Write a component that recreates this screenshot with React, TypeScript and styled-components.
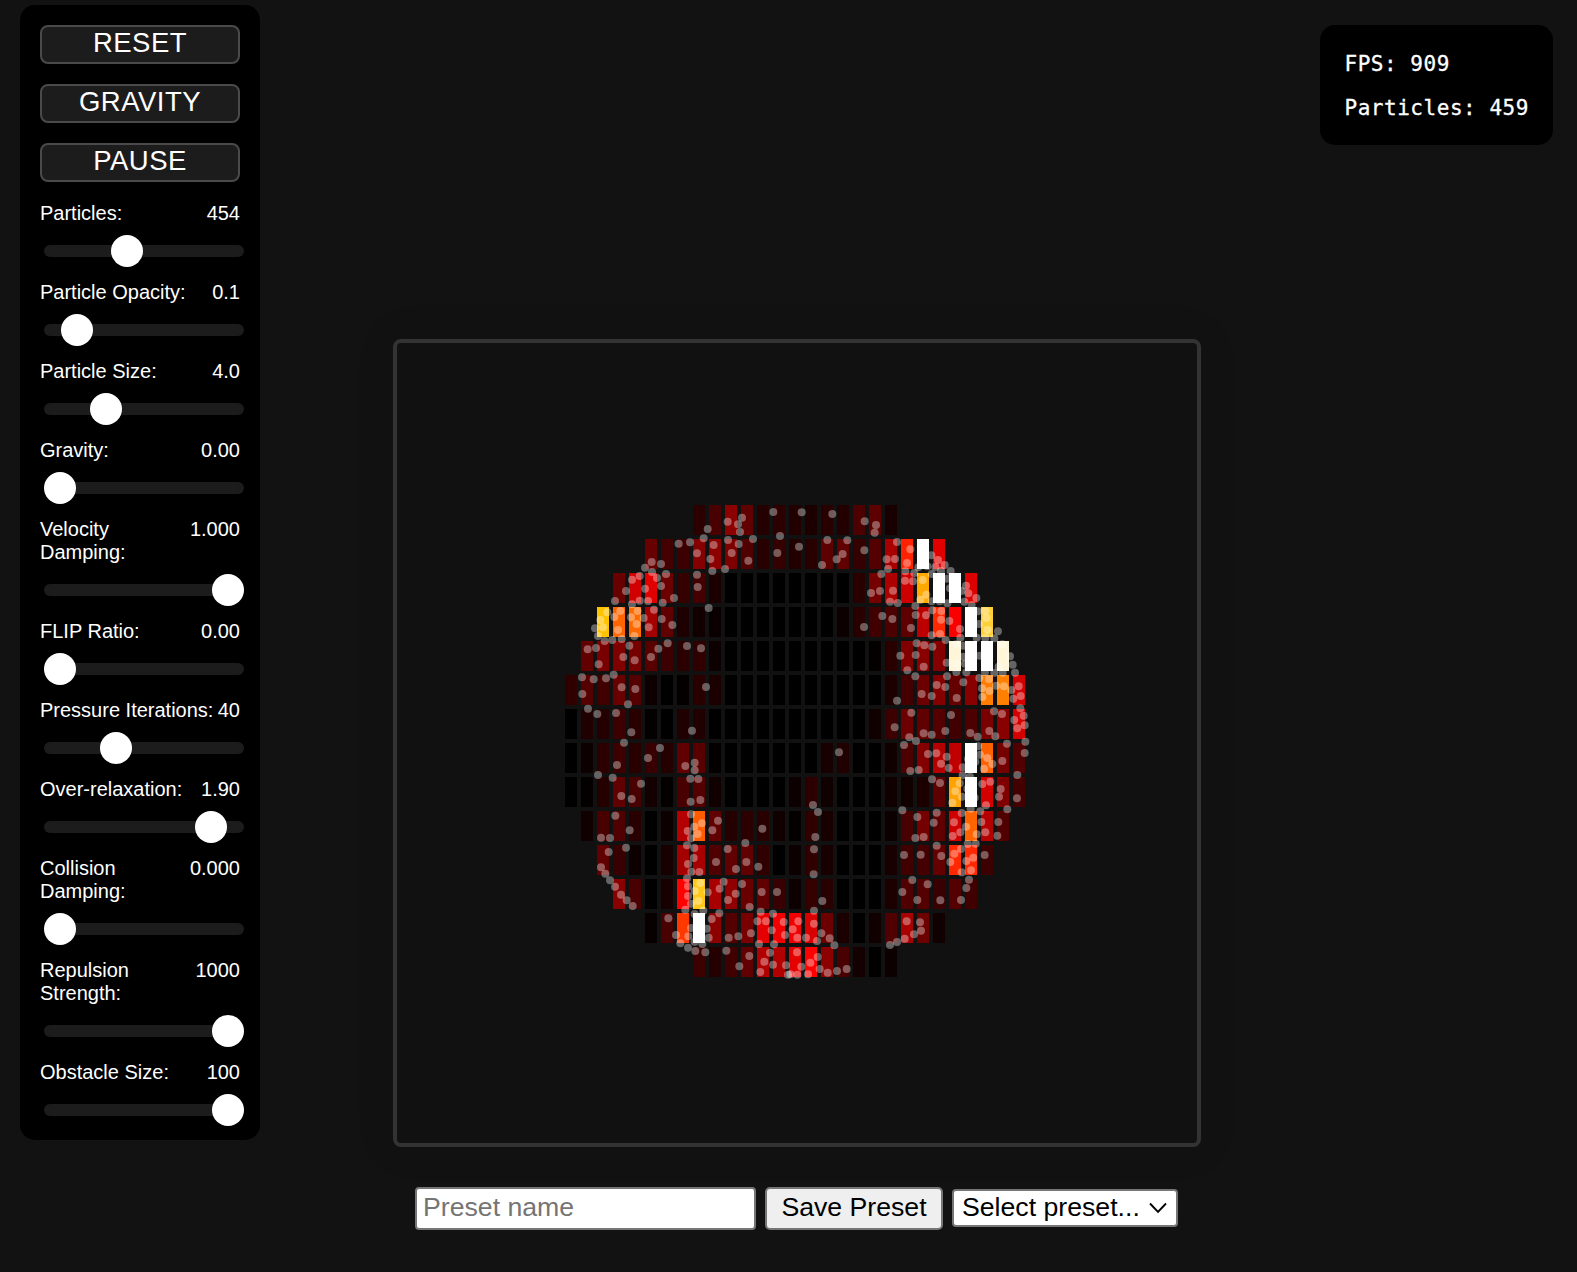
import React from "react";
import styled, { createGlobalStyle } from "styled-components";

const GlobalStyle = createGlobalStyle`
  * { box-sizing: border-box; }
  html, body { margin: 0; padding: 0; background: #121212; }
  body { font-family: "Liberation Sans", Arial, sans-serif; color: #fff; overflow: hidden; }
`;

const Page = styled.div`
  display: flex;
  align-items: flex-start;
  width: 1577px;
  height: 1272px;
  padding: 5px 24px 0 20px;
  background: #121212;
`;

const Sidebar = styled.aside`
  flex: none;
  width: 240px;
  height: 1135px;
  padding: 20px 20px 0;
  border-radius: 15px;
  background: #000;
`;

const Actions = styled.div`
  display: flex;
  flex-direction: column;
  gap: 20px;
  margin-bottom: 20px;
`;

const ActionButton = styled.button`
  display: block;
  width: 200px;
  height: 39px;
  padding: 0 0 3px;
  border: 2px solid #4a4a4a;
  border-radius: 8px;
  background: #1c1c1c;
  color: #fff;
  font: 27.5px/30px "Liberation Sans", Arial, sans-serif;
  letter-spacing: 0.5px;
  text-align: center;
`;

const Control = styled.div`
  padding-bottom: 14px;
`;

const ControlLabel = styled.label`
  display: flex;
  justify-content: space-between;
  align-items: flex-start;
  font-size: 20px;
  line-height: 23px;
`;

const Slider = styled.input`
  appearance: none;
  display: block;
  width: 200px;
  height: 32px;
  margin: 10px 0 0 4px;
  background: transparent;

  &::-webkit-slider-runnable-track {
    height: 12px;
    border-radius: 6px;
    background: #1c1c1c;
  }
  &::-webkit-slider-thumb {
    appearance: none;
    width: 32px;
    height: 32px;
    margin-top: -10px;
    border-radius: 50%;
    background: #fff;
  }
`;

const Main = styled.main`
  flex: none;
  display: flex;
  flex-direction: column;
  align-items: center;
  width: 808px;
  margin: 334px 0 0 133px;
`;

const Stage = styled.div`
  width: 808px;
  height: 808px;
  border: 4px solid #333;
  border-radius: 8px;
  background: #111;
  box-shadow: 0 0 40px rgba(0, 0, 0, 0.1);
  svg { display: block; }
`;

const PresetBar = styled.div`
  display: flex;
  align-items: center;
  gap: 9px;
  margin: 40px 0 0 -1px;
`;

const PresetInput = styled.input`
  width: 341px;
  height: 43px;
  padding: 2px 6px 4px;
  border: 2px solid #767676;
  border-radius: 4px;
  background: #fff;
  font: 26.667px/31px "Liberation Sans", Arial, sans-serif;
  &::placeholder { color: #757575; opacity: 1; }
`;

const SaveButton = styled.button`
  width: 178px;
  height: 43px;
  padding: 0 0 3px;
  border: 2px solid #767676;
  border-radius: 5px;
  background: #efefef;
  color: #000;
  font: 26.667px/31px "Liberation Sans", Arial, sans-serif;
  white-space: nowrap;
`;

const PresetSelect = styled.button`
  display: flex;
  align-items: center;
  justify-content: space-between;
  width: 226px;
  height: 38px;
  margin-bottom: 1px;
  padding: 0 8px 1px 8px;
  border: 2px solid #767676;
  border-radius: 4px;
  background: #fff;
  color: #000;
  font: 26.667px/31px "Liberation Sans", Arial, sans-serif;
  white-space: nowrap;
  svg { flex: none; margin-top: 1px; }
`;

const Stats = styled.section`
  flex: none;
  width: 233px;
  height: 120px;
  margin: 20px 0 0 auto;
  padding: 17px 23px 15px 24.5px;
  border-radius: 15px;
  background: #000;
  font: 21px/44px "DejaVu Sans Mono", monospace;
  letter-spacing: 0.53px;
  -webkit-text-stroke: 0.3px #fff;
  white-space: nowrap;
`;

interface ControlSpec {
  name: string;
  value: string;
  position: number;
}

/* position is the travel of the thumb, 0 to 168 */
const controls: ControlSpec[] = [
  { name: "Particles:", value: "454", position: 67 },
  { name: "Particle Opacity:", value: "0.1", position: 17 },
  { name: "Particle Size:", value: "4.0", position: 46 },
  { name: "Gravity:", value: "0.00", position: 0 },
  { name: "Velocity Damping:", value: "1.000", position: 168 },
  { name: "FLIP Ratio:", value: "0.00", position: 0 },
  { name: "Pressure Iterations:", value: "40", position: 56 },
  { name: "Over-relaxation:", value: "1.90", position: 151 },
  { name: "Collision Damping:", value: "0.000", position: 0 },
  { name: "Repulsion Strength:", value: "1000", position: 168 },
  { name: "Obstacle Size:", value: "100", position: 168 },
];

/* Each row: first column, then heat per cell. Two digits are a red level, six a full colour. */
const heat: [number, string][] = [
  [8, "2a 48 8c 60 24 2c 22 1c 28 22 4c 5c 18"],
  [5, "68 44 3c 84 8c 7c 50 28 34 22 28 5c 60 34 54 a8 ff2200 ffffff e0"],
  [3, "68 d0 e0 6c 34 44 1c 00 00 00 00 00 00 00 00 28 74 ac cc ffa800 ffffff ffffff dc"],
  [2, "ffc400 ff6400 ff6a00 a4 60 1e 12 0a 00 00 00 00 00 00 00 0c 28 40 4c 5e bc ff2800 f8 ffffff ffd035"],
  [1, "62 78 80 74 58 3c 2a 30 0c 00 00 00 00 00 00 00 00 00 04 28 80 88 84 fff5d8 ffffff ffffff fff5d8"],
  [0, "30 54 40 68 54 0e 00 04 28 1c 00 00 00 00 00 00 00 00 00 00 1c 44 6c 84 64 88 ff7c00 ff8000 d4"],
  [0, "00 20 24 3c 28 04 00 20 20 00 00 00 00 00 00 00 00 00 00 10 3c 6c 60 54 40 4c 78 88 d4"],
  [0, "00 0c 2c 3c 28 38 24 60 58 04 00 00 00 00 00 00 18 20 00 00 10 4c 84 b4 c0 ffffff ff6000 74 50"],
  [0, "00 04 24 60 48 14 04 48 54 10 00 00 00 00 0c 2c 10 00 00 00 10 10 1c 5c ffa200 ffffff d4 80 44"],
  [1, "10 48 50 28 00 0c b4 ff5c00 60 24 2c 28 10 04 30 18 00 00 00 0c 48 74 60 d0 ff6400 b4 50"],
  [2, "60 38 0c 00 18 a4 a8 50 60 60 30 00 0c 30 18 00 00 00 18 40 44 64 ff2800 ff2800 3c"],
  [3, "88 48 00 18 ff ffc818 a8 90 68 60 38 0c 34 28 00 00 00 1c 50 54 38 54 40"],
  [5, "08 48 ff3800 ffffff 8c 54 78 e4 f0 f0 d8 6c 1c 00 10 50 a8 6c 10"],
  [8, "3c 24 40 60 b0 b0 e4 ff 8c 48 14 00 0c"],
];

/* Particle positions per tile, in thirds of a pixel from the tile origin. */
const tiles: [number, number, string][] = [
  [550, 490, "533,95 576,83 564,103 570,126 473,117 461,145 670,66 690,138 609,147 534,150 566,162 386,161 420,157 491,165 441,190 481,207 545,189 595,212 682,189 305,216 333,222 285,233 306,246 321,264 348,252 269,258 246,269 441,254 487,243 525,237 443,291 285,296 333,288 228,303 195,333 246,343 269,332 294,333 338,338 372,324 476,354 172,367 151,390 159,412 135,415 144,438 193,381 211,363 204,420 243,382 263,363 260,402 281,384 312,359 296,412 335,387 367,405 253,438 164,453 187,450 215,447 238,467 353,460 411,468 453,475 138,474 113,478 325,476"],
  [790, 490, "35,67 127,72 224,94 258,105 254,128 112,150 172,151 27,170 158,192 140,208 96,225 223,181 321,156 361,178 290,208 315,207 351,219 294,237 274,252 346,244 373,249 424,196 444,210 464,225 436,231 482,243 385,232 412,229 345,272 369,274 398,270 243,309 270,303 309,302 300,335 323,339 409,314 391,329 425,252 453,243 472,266 528,287 535,310 559,324 472,340 449,334 425,334 523,335 545,345 376,348 514,303 480,295 427,361 454,363 453,389 377,375 408,376 277,378 307,387 222,411 363,414 478,393 510,417 425,436 450,432 467,450 511,443 567,402 586,363 589,384 592,420 624,424 613,445 586,444 560,443 563,364 380,460 403,466 427,470 520,467 499,463 637,463"],
  [550, 650, "146,43 220,21 254,31 303,21 96,82 131,88 168,85 191,74 215,112 256,117 97,132 234,163 114,176 142,192 198,189 468,111 244,247 222,278 426,242 330,294 294,324 201,345 144,375 188,383 273,401 214,438 245,447 196,497 406,348 434,338 434,361 421,386 445,387 451,450 422,455 423,493"],
  [790, 650, "331,17 377,15 352,61 401,50 470,38 499,66 376,79 440,105 466,111 395,132 425,138 500,144 321,152 364,188 314,232 358,262 401,250 425,254 466,243 378,273 342,285 483,195 520,97 471,79 529,67 520,20 525,41 499,41 569,17 568,84 576,115 597,87 599,123 577,141 618,107 642,109 613,68 638,68 675,68 668,44 660,19 585,66 626,50 664,120 686,109 692,138 670,146 691,175 701,197 673,210 704,226 682,235 612,184 636,192 541,249 563,260 598,243 616,259 706,275 704,309 651,281 414,312 439,310 470,320 453,341 476,354 386,360 361,363 147,307 637,333 682,375 564,289 570,314 592,324 607,342 582,356 518,352 534,327 556,335 518,376 540,380 426,388 450,399 509,400 496,424 487,458 516,440 532,416 554,443 577,402 601,395 632,417 627,440 588,466 681,445 652,478 571,484 542,476 515,489 440,488 382,501 337,481 69,465 84,486"],
  [550, 820, "504,2 637,26 487,31 456,10 433,20 443,42 413,33 423,55 239,31 153,53 180,54 228,83 176,96 153,142 166,161 180,181 195,200 213,224 230,241 248,258 411,76 433,84 431,114 414,132 424,155 448,156 498,126 533,87 558,147 586,69 589,126 625,140 411,175 451,189 414,199 434,213 414,228 445,243 423,251 406,269 473,217 509,206 521,185 534,240 557,221 576,192 599,261 635,216 681,216 460,272 434,282 508,280 485,297 355,295 378,345 391,370 414,383 415,349 423,324 470,326 476,353 434,365 457,372 436,393 466,397 529,392 536,353 565,349 603,340 598,408 568,439 622,304 648,304 632,275 669,281 701,306 665,331 705,345 627,372 672,373 660,398 643,425 669,434 631,456 708,436 714,464"],
  [790, 820, "76,51 72,88 71,163 97,243 72,272 72,311 25,304 8,328 22,353 48,353 81,363 94,340 119,355 133,376 21,397 83,411 61,428 34,440 22,464 54,463 1,463 89,447 113,458 141,453 170,447 300,375 321,366 344,356 372,343 393,332 390,307 350,304 376,54 401,51 431,8 342,105 392,104 440,77 454,108 481,126 493,101 513,87 533,72 557,71 488,48 511,37 492,7 528,20 574,6 560,43 586,37 625,6 622,47 584,105 550,113 529,123 543,151 515,157 367,180 337,216 413,193 382,240 451,241 513,240 529,204 537,179"],
];

const particles = tiles.flatMap(([ox, oy, points]) =>
  points.split(" ").map((point) => {
    const [x, y] = point.split(",").map(Number);
    return { x: ox + x / 3, y: oy + y / 3 };
  })
);

function Simulation() {
  return (
    <svg width="800" height="800" viewBox="397 343 800 800">
      <g shapeRendering="crispEdges">
        {heat.map(([start, row], r) =>
          row.split(" ").map((level, i) => (
            <rect
              key={`${r}-${i}`}
              x={565 + 16 * (start + i)}
              y={505 + 34 * r}
              width="12"
              height="30"
              fill={level.length === 2 ? `#${level}0000` : `#${level}`}
            />
          ))
        )}
      </g>
      <g fill="#fff" fillOpacity="0.35">
        {particles.map((p, i) => (
          <circle key={i} cx={p.x} cy={p.y} r="4" />
        ))}
      </g>
    </svg>
  );
}

export default function App() {
  return (
    <>
      <GlobalStyle />
      <Page>
        <Sidebar>
          <Actions>
            <ActionButton>RESET</ActionButton>
            <ActionButton>GRAVITY</ActionButton>
            <ActionButton>PAUSE</ActionButton>
          </Actions>
          {controls.map((c) => (
            <Control key={c.name}>
              <ControlLabel>
                <span>{c.name}</span>
                <span>{c.value}</span>
              </ControlLabel>
              <Slider type="range" min={0} max={168} defaultValue={c.position} />
            </Control>
          ))}
        </Sidebar>
        <Main>
          <Stage>
            <Simulation />
          </Stage>
          <PresetBar>
            <PresetInput placeholder="Preset name" />
            <SaveButton>Save Preset</SaveButton>
            <PresetSelect>
              <span>Select preset...</span>
              <svg width="20" height="12" viewBox="0 0 20 12" fill="none" stroke="#000" strokeWidth="1.9">
                <path d="M2 1.5 L10 9.8 L18 1.5" />
              </svg>
            </PresetSelect>
          </PresetBar>
        </Main>
        <Stats>
          <div>FPS: 909</div>
          <div>Particles: 459</div>
        </Stats>
      </Page>
    </>
  );
}
